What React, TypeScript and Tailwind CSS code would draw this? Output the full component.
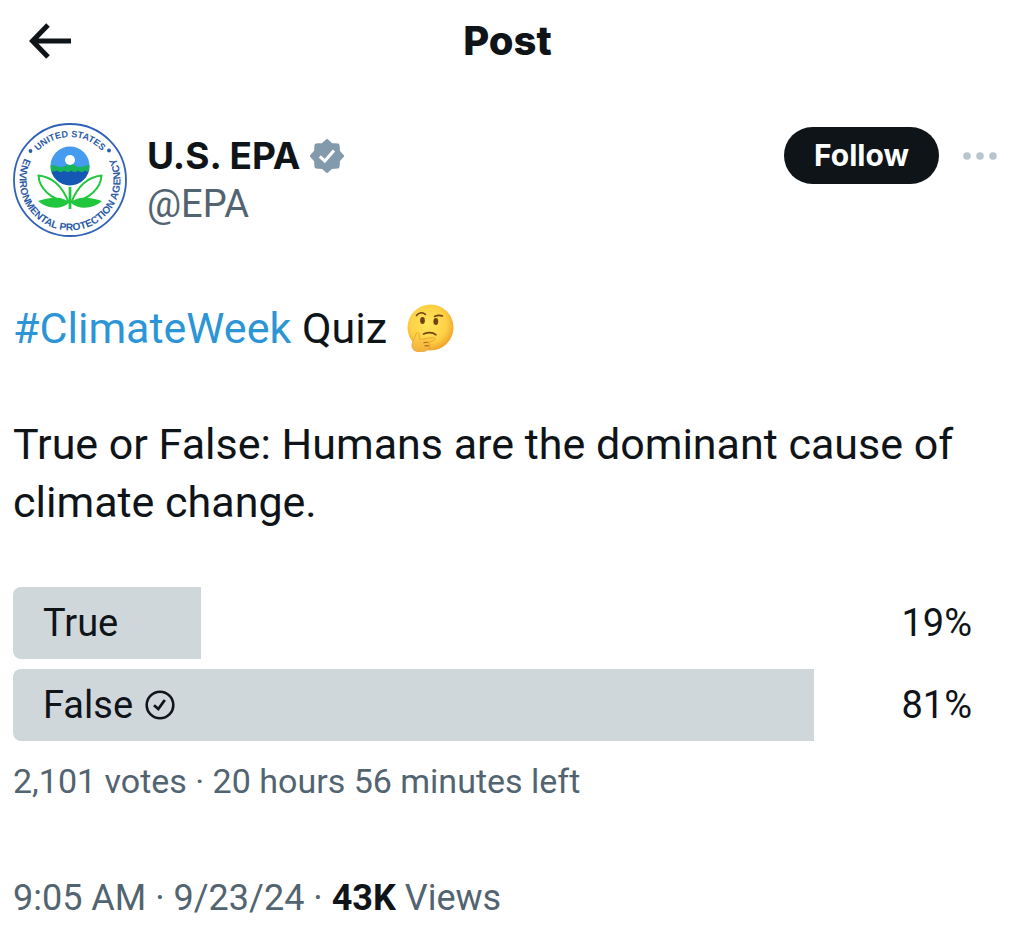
import { useId } from 'react';

const options = [
  { label: 'True', percent: 19, voted: false },
  { label: 'False', percent: 81, voted: true },
];

function BackIcon() {
  return (
    <svg viewBox="0 0 42 36" className="h-9 w-[42px]" fill="none" stroke="currentColor" strokeWidth="5" aria-hidden="true">
      <path d="M42 18H4M19 2 3.500 18 19 34" />
    </svg>
  );
}

function VerifiedIcon() {
  return (
    <svg viewBox="0 0 34 34" className="size-[34px] shrink-0" role="img" aria-label="Verified account">
      <path
        d="M17 1.500 21.500 5.500 28 6 28.500 12.500 32.500 17 28.500 21.500 28 28 21.500 28.500 17 32.500 12.500 28.500 6 28 5.500 21.500 1.500 17 5.500 12.500 6 6 12.500 5.500Z"
        fill="#829aab"
        stroke="#829aab"
        strokeWidth="3"
        strokeLinejoin="round"
      />
      <path d="m9.800 17.300 5 4.700 9.200-10.500" fill="none" stroke="#fff" strokeWidth="3" />
    </svg>
  );
}

function VotedIcon() {
  return (
    <svg viewBox="0 0 30 30" className="size-[30px]" fill="none" stroke="currentColor" role="img" aria-label="Your vote">
      <circle cx="15" cy="15" r="13.300" strokeWidth="2.600" />
      <path d="m9 15.300 4.300 3.700 6.500-9" strokeWidth="2.800" />
    </svg>
  );
}

function EpaSeal() {
  const id = useId();
  return (
    <svg viewBox="0 0 114 114" className="size-[114px] shrink-0" role="img" aria-label="U.S. EPA">
      <defs>
        <path id={`${id}-top`} d="M14 57a43 43 0 0 1 86 0" />
        <path id={`${id}-bottom`} d="M57 6.500a50.500 50.500 0 0 0 0 101a50.500 50.500 0 0 0 0-101" />
        <clipPath id={`${id}-globe`}>
          <circle cx="57" cy="43" r="19.500" />
        </clipPath>
      </defs>
      <circle cx="57" cy="57" r="56" fill="#fff" stroke="#2f62b5" strokeWidth="1.800" />
      <g fill="#2c5ba8" fontFamily="Liberation Sans, Arial, sans-serif" fontWeight="700">
        <text textAnchor="middle" fontSize="9.200">
          <textPath href={`#${id}-top`} startOffset="50%">UNITED STATES</textPath>
        </text>
        <text textAnchor="middle" fontSize="10.200">
          <textPath href={`#${id}-bottom`} startOffset="50%">ENVIRONMENTAL PROTECTION AGENCY</textPath>
        </text>
        <circle cx="17.500" cy="28" r="1.900" />
        <circle cx="96" cy="27.500" r="1.900" />
      </g>
      <g clipPath={`url(#${id}-globe)`}>
        <path d="M36 22h42v24H36z" fill="#459bed" />
        <path d="M36 46h42v18H36z" fill="#1557b5" />
        <path d="M36 42.500q5-1 9 1t8-1 9 0 8 1 8-1v5q-3 2-6 0-3 3-7 0-3 3-7 0-3 3-7 0-3 3-7 0-4 2-8 0z" fill="#18b45b" />
      </g>
      <circle cx="57" cy="37" r="5" fill="#fff" />
      <path d="M57 64v22" stroke="#20c63c" strokeWidth="2.800" />
      <g fill="#fff" stroke="#20c63c" strokeWidth="2" strokeLinejoin="round">
        <path d="M55.500 79C50 65 40 54 25.500 52.500 26 65 38 77 55.500 79Z" />
        <path d="M58.500 79C64 65 74 54 88.500 52.500 88 65 76 77 58.500 79Z" />
      </g>
      <path d="M56 80C49 72 35 75 25 78 34 86 48 87 56 80ZM58 80C65 72 79 75 89 78 80 86 66 87 58 80Z" fill="#20c63c" />
    </svg>
  );
}

function ThinkingFace() {
  const id = useId();
  return (
    <svg viewBox="0 0 48 48" className="ml-2 inline-block size-12 align-[-9px]" role="img" aria-label="Thinking face">
      <defs>
        <radialGradient id={`${id}-face`} cx="45%" cy="42%" r="58%">
          <stop offset="0" stopColor="#ffe65c" />
          <stop offset="0.700" stopColor="#fdd044" />
          <stop offset="1" stopColor="#f2a52c" />
        </radialGradient>
        <linearGradient id={`${id}-hand`} x2="0" y2="1">
          <stop offset="0" stopColor="#ffd34c" />
          <stop offset="1" stopColor="#f5b03a" />
        </linearGradient>
      </defs>
      <circle cx="24.500" cy="23.500" r="23" fill={`url(#${id}-face)`} />
      <g fill="none" stroke="#70421a" strokeLinecap="round">
        <path d="M10.500 11.500c2.500-3.500 6.500-3.500 9-1M28.500 12.500c3-1.500 5.500-1.500 8-.5" strokeWidth="1.600" />
        <path d="M17.500 30c5-2 9-2 12.500.800" strokeWidth="1.600" />
      </g>
      <ellipse cx="16.500" cy="16.500" rx="2.400" ry="3.400" fill="#70421a" />
      <ellipse cx="29.800" cy="17.500" rx="2.400" ry="3.400" fill="#70421a" />
      <path
        d="M10.500 29c2-.5 3 1 3 3l.5 3.500 12.500-2c3-.3 3.500 2.500 1 3.300L22 38.500c2 .5 2.500 2 1.500 3.500.8 1.500 0 2.800-1.500 3.300-1.500 1.700-4.500 2.500-8 2.500C8.500 47.800 5.500 45 6 40Z"
        fill={`url(#${id}-hand)`}
        stroke="#e5a030"
        strokeWidth=".8"
      />
      <path d="M22 38.500c-1.500-.5-3-.3-4.500.5M23 42c-1.500-.5-3-.5-4.500 0" fill="none" stroke="#a8661c" strokeWidth="1.200" />
    </svg>
  );
}

export default function App() {
  return (
    <main className="min-h-screen bg-white pr-3.5 pl-[13px] font-['Roboto',sans-serif] text-[#0f1419]">
      <header className="grid grid-cols-[1fr_auto_1fr] items-center pt-4">
        <button type="button" aria-label="Back" className="ml-4 justify-self-start">
          <BackIcon />
        </button>
        <h1 className="font-['Inter',sans-serif] text-[40px] leading-[50px] font-extrabold">Post</h1>
      </header>

      <article>
        <div className="mt-[57px] flex items-start">
          <EpaSeal />
          <div className="ml-5 pt-[9px]">
            <div className="flex items-center gap-2.5">
              <span className="font-['Inter',sans-serif] text-[37px] leading-12 font-bold">U.S. EPA</span>
              <VerifiedIcon />
            </div>
            <div className="text-[38px] leading-12 text-[#536471]">@EPA</div>
          </div>
          <div className="mt-1 ml-auto flex items-center gap-6 pr-[5px]">
            <button type="button" className="h-[57px] rounded-full bg-[#0f1419] px-[30px] font-['Inter',sans-serif] text-[30px] font-bold text-white">
              Follow
            </button>
            <button type="button" aria-label="More">
              <svg viewBox="0 0 34 8" className="h-2 w-[34px]" fill="#b9c5cd" aria-hidden="true">
                <circle cx="4" cy="4" r="3.800" />
                <circle cx="17" cy="4" r="3.800" />
                <circle cx="30" cy="4" r="3.800" />
              </svg>
            </button>
          </div>
        </div>

        <div className="mt-[62px] text-[43px] leading-[58px]">
          <p>
            <a href="#climateweek" className="text-[#2b95d6]">#ClimateWeek</a> Quiz <ThinkingFace />
          </p>
          <p className="mt-[58px]">True or False: Humans are the dominant cause of climate change.</p>
        </div>

        {/* Poll results */}
        <ul className="mt-14 flex flex-col gap-2.5 text-[38px]">
          {options.map((option) => (
            <li key={option.label} className="relative flex h-[72px] items-center justify-between px-[30px]">
              <div className="absolute inset-y-0 left-0 rounded-l-lg bg-[#cfd7db]" style={{ width: `${option.percent}%` }} />
              <span className="relative flex items-center gap-3">
                {option.label}
                {option.voted && <VotedIcon />}
              </span>
              <span className="relative">{option.percent}%</span>
            </li>
          ))}
        </ul>
        <p className="mt-4 text-[34px] leading-12 text-[#536471]">2,101 votes · 20 hours 56 minutes left</p>
        <p className="mt-[69px] text-[36px] leading-12 text-[#536471]">
          9:05 AM · 9/23/24 · <strong className="font-bold text-[#0f1419]">43K</strong> Views
        </p>
      </article>
    </main>
  );
}
